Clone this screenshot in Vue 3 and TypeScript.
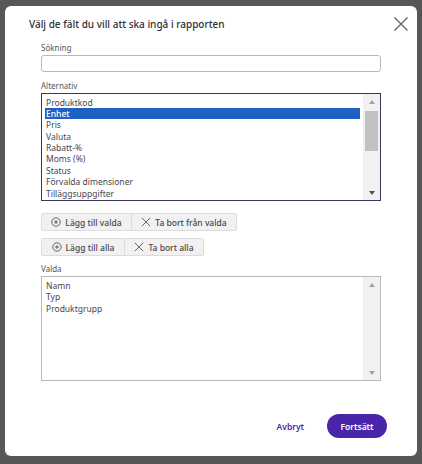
<script setup lang="ts">
const options: string[] = ['Produktkod', 'Enhet', 'Pris', 'Valuta', 'Rabatt-%', 'Moms (%)', 'Status', 'Förvalda dimensioner', 'Tilläggsuppgifter']
const selected: string[] = ['Namn', 'Typ', 'Produktgrupp']
const rows = [
  [{ label: 'Lägg till valda', add: true, w: 91 }, { label: 'Ta bort från valda', add: false, w: 106 }],
  [{ label: 'Lägg till alla', add: true, w: 84 }, { label: 'Ta bort alla', add: false, w: 80 }],
]
</script>

<template>
  <div class="backdrop">
    <div class="modal">
      <header class="head">
        <h1 class="title">Välj de fält du vill att ska ingå i rapporten</h1>
        <svg class="close" viewBox="0 0 16 16" width="16" height="16"><path d="M1.5 1.5 14.5 14.5M14.5 1.5 1.5 14.5" stroke="#666" stroke-width="1.4" fill="none" /></svg>
      </header>
      <div class="body">
        <label class="lab lab-first">Sökning</label>
        <input class="search" type="text" />
        <label class="lab lab-alt">Alternativ</label>
        <div class="list list-focus">
          <ul class="items">
            <li v-for="(o, i) in options" :key="o" :class="{ sel: i === 1 }">{{ o }}</li>
          </ul>
          <div class="bar">
            <span class="arrow up"></span>
            <span class="thumb"></span>
            <span class="arrow down dark"></span>
          </div>
        </div>
        <div v-for="(row, r) in rows" :key="r" class="btns" :class="'btns-' + r">
          <button v-for="b in row" :key="b.label" class="btn" :style="{ width: b.w + 'px' }">
            <svg v-if="b.add" viewBox="0 0 10 10" width="10" height="10"><circle cx="5" cy="5" r="4.2" stroke="#444" stroke-width=".8" fill="none" /><path d="M3 5h4M5 3v4" stroke="#444" stroke-width=".8" /></svg>
            <svg v-else viewBox="0 0 10 10" width="10" height="10"><path d="M.8.8 9.2 9.2M9.2.8.8 9.2" stroke="#444" stroke-width=".8" /></svg>
            <span>{{ b.label }}</span>
          </button>
        </div>
        <label class="lab lab-val">Valda</label>
        <div class="list list-val">
          <ul class="items items-val">
            <li v-for="o in selected" :key="o">{{ o }}</li>
          </ul>
          <div class="bar bar-val">
            <span class="arrow up"></span>
            <span class="arrow down"></span>
          </div>
        </div>
      </div>
      <footer class="foot">
        <a class="cancel">Avbryt</a>
        <button class="go">Fortsätt</button>
      </footer>
    </div>
  </div>
</template>

<style>
html, body { margin: 0; background: #575757; }
</style>

<style scoped>
.backdrop {
  width: 422px;
  height: 464px;
  box-sizing: border-box;
  padding: 6px 5px 8px;
  background: #575757;
  font-family: "Noto Sans", sans-serif;
  overflow: hidden;
}
.modal {
  height: 450px;
  background: #fff;
  border-radius: 6px;
  box-sizing: border-box;
  display: flex;
  flex-direction: column;
}
.head {
  display: flex;
  justify-content: space-between;
  padding: 11px 8px 0 24px;
  height: 27px;
  box-sizing: border-box;
}
.title {
  margin: 0;
  font-size: 10px;
  line-height: 14px;
  font-weight: 500;
  color: #2f2f35;
}
.close { margin-top: -1px; }
.body {
  padding: 0 36px;
  display: flex;
  flex-direction: column;
  align-items: flex-start;
}
.lab {
  font-size: 8px;
  line-height: 10px;
  color: #555;
}
.lab-first { margin-top: 10px; margin-bottom: 2px; }
.lab-alt { margin-top: 9px; margin-bottom: 2px; }
.lab-val { margin-top: 8px; margin-bottom: 2px; }
.search {
  width: 340px;
  height: 17px;
  box-sizing: border-box;
  border: 1px solid #b9b9b9;
  border-radius: 3px;
  background: #fff;
  padding: 0;
  margin: 0;
  display: block;
}
.list {
  width: 340px;
  box-sizing: border-box;
  display: flex;
  justify-content: space-between;
  background: #fff;
}
.list-focus { height: 108px; border: 1px solid #3b3560; }
.list-val { height: 105px; border: 1px solid #b9b9b9; }
.items {
  list-style: none;
  margin: 0;
  padding: 2.5px 3px 0;
  flex: 1;
  font-size: 8.5px;
  line-height: 11.4px;
  color: #47474d;
}
.items-val { padding-top: 3px; }
.items li { padding-left: 1px; height: 11.4px; white-space: nowrap; }
.items li.sel { background: #1f60c4; color: #fff; font-weight: 500; }
.bar {
  width: 17px;
  background: #f1f1f1;
  display: flex;
  flex-direction: column;
  align-items: center;
  padding: 6px 0 5px;
  box-sizing: border-box;
}
.thumb {
  width: 13px;
  height: 40px;
  margin-top: 7px;
  background: #c1c1c1;
}
.arrow { width: 0; height: 0; border-left: 3.5px solid transparent; border-right: 3.5px solid transparent; }
.up { border-bottom: 4px solid #a3a3a3; }
.down { border-top: 4px solid #a3a3a3; margin-top: auto; }
.dark { border-top-color: #505050; }
.btns { display: flex; height: 18px; }
.btns-0 { margin-top: 12px; }
.btns-1 { margin-top: 7px; }
.btn {
  height: 18px;
  box-sizing: border-box;
  border: 1px solid #dcdcdc;
  background: #f1f1f1;
  padding: 0;
  margin: 0;
  margin-left: -1px;
  display: flex;
  align-items: center;
  justify-content: center;
  gap: 4px;
  font-family: inherit;
  font-size: 8.5px;
  font-weight: 500;
  color: #47474d;
}
.btn:first-child { margin-left: 0; border-radius: 2px 0 0 2px; }
.btn:last-child { border-radius: 0 2px 2px 0; }
.foot {
  display: flex;
  justify-content: flex-end;
  align-items: center;
  gap: 23px;
  padding: 33px 30px 0 0;
}
.cancel { font-size: 8.5px; font-weight: 600; color: #4a25aa; }
.go {
  width: 60px;
  height: 24px;
  border: 0;
  padding: 0;
  border-radius: 12px;
  background: #4a25aa;
  color: #fff;
  font-family: inherit;
  font-size: 8.5px;
  font-weight: 600;
}
</style>
